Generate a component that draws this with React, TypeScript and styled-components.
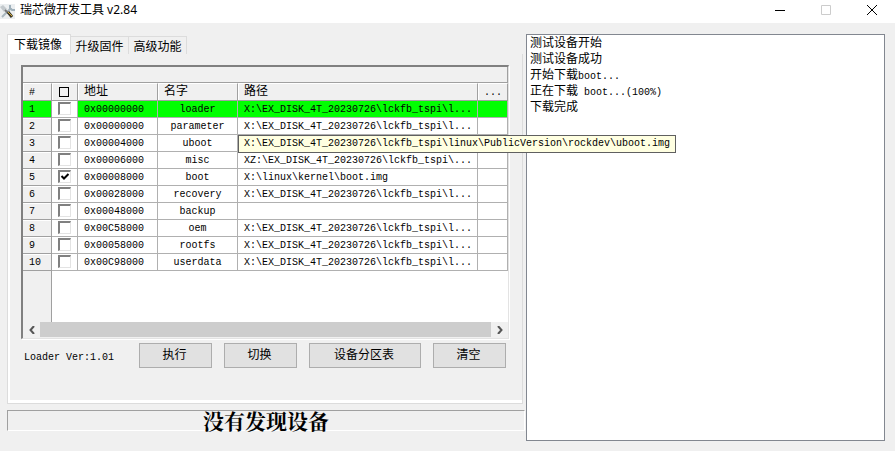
import React from "react";
import styled, { createGlobalStyle } from "styled-components";

const GlobalStyle = createGlobalStyle`
  * { box-sizing: border-box; }
  html, body { margin: 0; background: #f0f0f0; }
  body, button, input { font-family: "Liberation Mono", "Noto Sans CJK SC", monospace; }
  body, button { font-size: 12px; color: #000; }
`;

const Window = styled.div`
  min-height: 100vh;
  display: flex;
  flex-direction: column;
  background: #f0f0f0;
`;

const TitleBar = styled.header`
  height: 23px;
  flex: none;
  display: flex;
  align-items: center;
  background: #fff;
  font-family: "Noto Sans", "Noto Sans CJK SC", sans-serif;
`;

const TitleText = styled.h1`
  flex: 1;
  margin: 0 0 3px 4px;
  font-size: 12px;
  line-height: 16px;
  font-weight: 400;
`;

const WindowButton = styled.button`
  width: 46px;
  height: 20px;
  margin-bottom: 3px;
  padding: 0;
  border: 0;
  background: transparent;
  display: flex;
  align-items: center;
  justify-content: center;
`;

const Body = styled.main`
  flex: 1;
  display: grid;
  grid-template-columns: minmax(0, 518fr) minmax(0, 359fr);
  gap: 1px;
  padding: 11px 10px 10px 7px;
`;

const LeftColumn = styled.div`
  display: flex;
  flex-direction: column;
`;

const TabList = styled.div`
  display: flex;
  align-items: flex-end;
  height: 20px;
`;

const Tab = styled.button<{ $active?: boolean }>`
  height: ${(p) => (p.$active ? 20 : 18)}px;
  width: ${(p) => (p.$active ? 64 : 58)}px;
  padding: ${(p) => (p.$active ? "2px 2px 0 0" : "3px 0 0 0")};
  border: 1px solid #dcdcdc;
  border-bottom: 0;
  border-left-width: ${(p) => (p.$active ? 1 : 0)}px;
  background: ${(p) => (p.$active ? "#fff" : "#f0f0f0")};
  line-height: 16px;
  text-align: center;
  white-space: nowrap;
`;

const TabPanel = styled.section`
  flex: 1;
  display: flex;
  flex-direction: column;
  margin-right: 2px;
  padding: 11px 13px 0 13px;
  border: 1px solid #dcdcdc;
  border-top: 0;
  box-shadow: inset 2px 0 #fff, inset 0 -3px #fff;
`;

const GridFrame = styled.div`
  flex: 1;
  display: flex;
  flex-direction: column;
  border: 1px solid #e3e3e3;
  border-left: 2px solid #808080;
  border-top: 2px solid #808080;
  box-shadow: 1px 1px #fff;
  background: #fff;
`;

const GroupBar = styled.div`
  height: 16px;
  border-right: 1px solid #a0a0a0;
  border-bottom: 1px solid #a0a0a0;
  background: #f0f0f0;
`;

const GridArea = styled.div`
  flex: 1;
  background: linear-gradient(to right, #f0f0f0 28px, #a0a0a0 28px, #a0a0a0 29px, #fff 29px);
`;

const Grid = styled.table`
  width: 100%;
  table-layout: fixed;
  border-collapse: separate;
  border-spacing: 0;
  font-size: 10px;
  line-height: 14px;
`;

const Col = styled.col<{ $w?: number }>`
  width: ${(p) => (p.$w ? `${p.$w}px` : "auto")};
`;

const HeadCell = styled.th`
  height: 18px;
  padding: 1px 0 0 6px;
  background: #f0f0f0;
  border-top: 1px solid #fff;
  border-right: 1px solid #a0a0a0;
  border-bottom: 1px solid #a0a0a0;
  box-shadow: inset 1px 0 #fff;
  text-align: left;
  font-weight: 400;
  font-size: 12px;
  line-height: 15px;
`;

const Cell = styled.td<{ $center?: boolean; $active?: boolean }>`
  position: relative;
  height: 17px;
  padding: ${(p) => (p.$center ? "2px 0 0 0" : "2px 0 0 6px")};
  border-right: 1px solid #b0b0b0;
  border-bottom: 1px solid #b0b0b0;
  background: ${(p) => (p.$active ? "#00ff00" : "#fff")};
  text-align: ${(p) => (p.$center ? "center" : "left")};
  white-space: nowrap;
`;

const CheckCell = styled.td`
  height: 17px;
  padding: 1px 0 0 6px;
  border-right: 1px solid #b0b0b0;
  border-bottom: 1px solid #b0b0b0;
  background: #fff;
  vertical-align: top;
`;

const RowHead = styled.th<{ $active?: boolean }>`
  height: 17px;
  padding: 2px 0 0 6px;
  border-right: 1px solid #a0a0a0;
  border-bottom: 1px solid #a0a0a0;
  background: ${(p) => (p.$active ? "#00ff00" : "#f0f0f0")};
  box-shadow: ${(p) => (p.$active ? "none" : "inset 0 1px #fff")};
  text-align: left;
  font-weight: 400;
`;

const CheckBox = styled.input`
  appearance: none;
  display: block;
  width: 13px;
  height: 13px;
  margin: 0;
  border: 1px solid #e3e3e3;
  border-left: 2px solid #808080;
  border-top: 2px solid #808080;
  background: #fff;
  &:checked {
    background: #fff url("data:image/svg+xml,%3Csvg xmlns='http://www.w3.org/2000/svg' viewBox='0 0 10 10'%3E%3Cpath d='M1.500 4L4 6.500L8.500 2' fill='none' stroke='black' stroke-width='2'/%3E%3C/svg%3E") center / 10px 10px no-repeat;
  }
`;

const HeadCheck = styled.input`
  appearance: none;
  display: block;
  width: 10px;
  height: 10px;
  margin: 0 0 1px 1px;
  border: 1px solid #000;
`;

const Tooltip = styled.div`
  position: absolute;
  z-index: 2;
  left: 0;
  top: 0;
  height: 18px;
  padding: 0 5px;
  border: 1px solid #606060;
  background: #ffffe1;
  line-height: 15px;
`;

const ScrollBar = styled.div`
  height: 16px;
  display: flex;
  align-items: stretch;
  background: #f0f0f0;
  border-bottom: 1px solid #f0f0f0;
`;

const ScrollArrow = styled.button`
  width: 17px;
  padding: 0;
  border: 0;
  background: #f0f0f0;
  display: flex;
  align-items: center;
  justify-content: center;
`;

const ScrollThumb = styled.div`
  flex: 1;
  background: #cdcdcd;
`;

const Actions = styled.div`
  display: flex;
  align-items: center;
  gap: 12px;
  margin: 4px 3px 35px 3px;
`;

const LoaderLabel = styled.span`
  flex: 1;
  font-size: 10px;
  line-height: 16px;
  padding-top: 4px;
`;

const ActionButton = styled.button<{ $wide?: boolean }>`
  width: ${(p) => (p.$wide ? 112 : 73)}px;
  height: 25px;
  padding: 0 2px 0 0;
  border: 1px solid #adadad;
  background: #e1e1e1;
  line-height: 22px;
`;

const StatusBar = styled.footer`
  height: 21px;
  margin: 6px 0 10px;
  border: 1px solid #fff;
  border-top-color: #a0a0a0;
  border-left-color: #a0a0a0;
  font-family: "Noto Serif CJK SC", "Noto Sans CJK SC", serif;
  font-size: 21px;
  line-height: 18px;
  font-weight: 700;
  text-align: center;
`;

const Log = styled.section`
  border: 1px solid #828790;
  background: #fff;
  padding: 1px 3px;
`;

const LogLine = styled.p`
  margin: 0;
  height: 16px;
  line-height: 16px;
  white-space: pre;
`;

const Latin = styled.span`
  font-size: 10px;
  line-height: 1;
`;

const LONG = "X:\\EX_DISK_4T_20230726\\lckfb_tspi\\l...";
const rows = [
  { address: "0x00000000", name: "loader", path: LONG },
  { address: "0x00000000", name: "parameter", path: LONG },
  { address: "0x00004000", name: "uboot", tip: "X:\\EX_DISK_4T_20230726\\lckfb_tspi\\linux\\PublicVersion\\rockdev\\uboot.img" },
  { address: "0x00006000", name: "misc", path: "XZ:\\EX_DISK_4T_20230726\\lckfb_tspi\\..." },
  { address: "0x00008000", name: "boot", path: "X:\\linux\\kernel\\boot.img", checked: true },
  { address: "0x00028000", name: "recovery", path: LONG },
  { address: "0x00048000", name: "backup", path: "" },
  { address: "0x00C58000", name: "oem", path: LONG },
  { address: "0x00058000", name: "rootfs", path: LONG },
  { address: "0x00C98000", name: "userdata", path: LONG },
];

function ToolsIcon() {
  return (
    <svg width="16" height="16" viewBox="0 0 16 16" aria-hidden="true">
      <path d="M0 0h15v15H0z" fill="#eceff1" />
      <path d="M2 13L11 4" stroke="#a9b6bf" strokeWidth="2" />
      <path d="M10 1v3l2 2h3" fill="none" stroke="#9fb0bb" strokeWidth="2" />
      <path d="M0 3l3-2 4 4-3 3z" fill="#c3c9cd" />
      <path d="M5 6l3 3" stroke="#777" strokeWidth="2" />
      <path d="M8 8l4 5" stroke="#3a3626" strokeWidth="3" />
      <path d="M8 8l4 4" stroke="#d9b13b" strokeWidth="1" />
    </svg>
  );
}

export default function App() {
  return (
    <Window>
      <GlobalStyle />
      <TitleBar>
        <ToolsIcon />
        <TitleText>瑞芯微开发工具 v2.84</TitleText>
        <WindowButton aria-label="最小化">
          <svg width="10" height="10"><path d="M0 5.5h10" stroke="#000" /></svg>
        </WindowButton>
        <WindowButton aria-label="最大化" disabled>
          <svg width="10" height="10"><path d="M.5.5h9v9h-9z" fill="none" stroke="#ccc" /></svg>
        </WindowButton>
        <WindowButton aria-label="关闭">
          <svg width="10" height="10"><path d="M0 0l10 10M10 0L0 10" stroke="#000" /></svg>
        </WindowButton>
      </TitleBar>
      <Body>
        <LeftColumn>
          <TabList role="tablist">
            <Tab role="tab" aria-selected="true" $active>下载镜像</Tab>
            <Tab role="tab" aria-selected="false">升级固件</Tab>
            <Tab role="tab" aria-selected="false">高级功能</Tab>
          </TabList>
          <TabPanel role="tabpanel">
            <GridFrame>
              <GroupBar />
              <GridArea>
                <Grid>
                  <colgroup>
                    <Col $w={29} />
                    <Col $w={26} />
                    <Col $w={80} />
                    <Col $w={80} />
                    <Col />
                    <Col $w={30} />
                  </colgroup>
                  <thead>
                    <tr>
                      <HeadCell scope="col"><Latin>#</Latin></HeadCell>
                      <HeadCell scope="col"><HeadCheck type="checkbox" aria-label="全选" /></HeadCell>
                      <HeadCell scope="col">地址</HeadCell>
                      <HeadCell scope="col">名字</HeadCell>
                      <HeadCell scope="col">路径</HeadCell>
                      <HeadCell scope="col"><Latin>...</Latin></HeadCell>
                    </tr>
                  </thead>
                  <tbody>
                    {rows.map((row, i) => (
                      <tr key={row.name}>
                        <RowHead scope="row" $active={i === 0}>{i + 1}</RowHead>
                        <CheckCell><CheckBox type="checkbox" aria-label={row.name} defaultChecked={row.checked} /></CheckCell>
                        <Cell $active={i === 0}>{row.address}</Cell>
                        <Cell $active={i === 0} $center>{row.name}</Cell>
                        <Cell $active={i === 0}>
                          {row.path}
                          {row.tip && <Tooltip role="tooltip">{row.tip}</Tooltip>}
                        </Cell>
                        <Cell $active={i === 0} />
                      </tr>
                    ))}
                  </tbody>
                </Grid>
              </GridArea>
              <ScrollBar>
                <ScrollArrow aria-label="向左滚动">
                  <svg width="8" height="8"><path d="M6 0L2.500 4L6 8" fill="none" stroke="#555" strokeWidth="2" /></svg>
                </ScrollArrow>
                <ScrollThumb />
                <ScrollArrow aria-label="向右滚动">
                  <svg width="8" height="8"><path d="M2 0L5.500 4L2 8" fill="none" stroke="#555" strokeWidth="2" /></svg>
                </ScrollArrow>
              </ScrollBar>
            </GridFrame>
            <Actions>
              <LoaderLabel>Loader Ver:1.01</LoaderLabel>
              <ActionButton>执行</ActionButton>
              <ActionButton>切换</ActionButton>
              <ActionButton $wide>设备分区表</ActionButton>
              <ActionButton>清空</ActionButton>
            </Actions>
          </TabPanel>
          <StatusBar>没有发现设备</StatusBar>
        </LeftColumn>
        <Log aria-label="日志">
          <LogLine>测试设备开始</LogLine>
          <LogLine>测试设备成功</LogLine>
          <LogLine>开始下载<Latin>boot...</Latin></LogLine>
          <LogLine>正在下载<Latin> boot...(100%)</Latin></LogLine>
          <LogLine>下载完成</LogLine>
        </Log>
      </Body>
    </Window>
  );
}
